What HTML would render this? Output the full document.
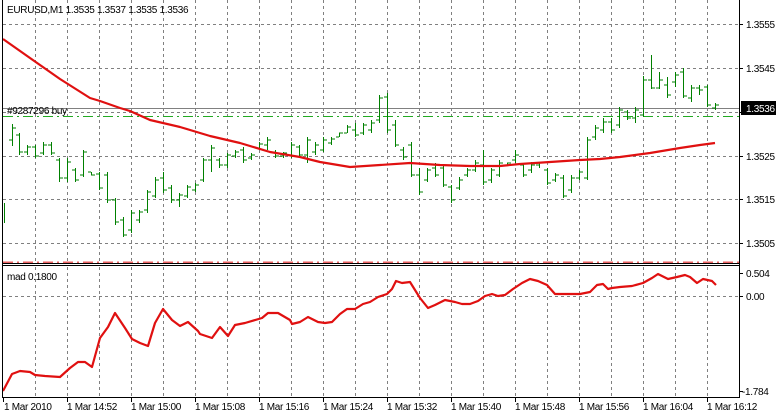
<!DOCTYPE html>
<html><head><meta charset="utf-8"><style>
html,body{margin:0;padding:0;background:#fff;}
svg{display:block;font-family:"Liberation Sans",sans-serif;font-size:10px;letter-spacing:-0.3px;}
</style></head><body>
<svg width="776" height="414" viewBox="0 0 776 414" xmlns="http://www.w3.org/2000/svg">
<rect width="776" height="414" fill="#fff"/>
<g stroke="#808080" stroke-width="1" stroke-dasharray="3,3" fill="none">
<path d="M35.5 0V263M67.5 0V263M99.5 0V263M131.5 0V263M163.5 0V263M195.5 0V263M227.5 0V263M259.5 0V263M291.5 0V263M323.5 0V263M355.5 0V263M387.5 0V263M419.5 0V263M451.5 0V263M483.5 0V263M515.5 0V263M547.5 0V263M579.5 0V263M611.5 0V263M643.5 0V263M675.5 0V263M707.5 0V263"/>
<path d="M35.5 267V397M67.5 267V397M99.5 267V397M131.5 267V397M163.5 267V397M195.5 267V397M227.5 267V397M259.5 267V397M291.5 267V397M323.5 267V397M355.5 267V397M387.5 267V397M419.5 267V397M451.5 267V397M483.5 267V397M515.5 267V397M547.5 267V397M579.5 267V397M611.5 267V397M643.5 267V397M675.5 267V397M707.5 267V397"/>
<path d="M3 24.5H739M3 68.5H739M3 112.5H739M3 156.5H739M3 199.5H739M3 243.5H739M3 296.5H739"/>
</g>
<path d="M3 108.5H739" stroke="#808080"/>
<path d="M3 116.5H739" stroke="#22aa22" stroke-dasharray="10,4,2,4"/>
<path d="M3 262.5H739" stroke="#e02020" stroke-width="2" stroke-dasharray="10,4,2,4" opacity="0.7"/>
<g stroke="#008000" stroke-width="1" fill="none">
<path d="M4.5 203V223M12.5 124V146M9 140H12M12 128H16M19.5 133V155M16 135H19M19 152H23M27.5 145V155M24 152H27M27 147H31M35.5 145V158M32 147H35M35 156H39M43.5 142V155M40 153H43M43 145H47M51.5 142V155M48 145H51M51 153H55M59.5 158V182M56 160H59M59 178H63M67.5 158V182M64 178H67M67 162H71M75.5 168V182M72 170H75M75 180H79M83.5 150V177M80 175H83M83 152H87M91.5 172V175M88 172H91M91 175H95M99.5 172V190M96 174H99M99 188H103M107.5 172V203M104 175H107M107 200H111M115.5 198V225M112 200H115M115 222H119M123.5 217V237M120 220H123M123 235H127M131.5 210V233M128 230H131M131 213H135M139.5 210V223M136 220H139M139 212H143M147.5 190V213M144 210H147M147 192H151M155.5 177V198M152 196H155M155 180H159M163.5 172V193M160 178H163M163 190H167M171.5 185V203M168 188H171M171 200H175M179.5 193V207M176 200H179M179 195H183M187.5 185V198M184 196H187M187 187H191M195.5 183V192M192 190H195M195 185H199M203.5 158V182M200 180H203M203 160H207M211.5 145V172M208 160H211M211 148H215M219.5 158V168M216 160H219M219 165H223M227.5 153V168M224 165H227M227 155H231M235.5 150V158M232 156H235M235 152H239M243.5 147V163M240 150H243M243 160H247M251.5 153V160M248 158H251M251 155H255M259.5 142V150M256 148H259M259 144H263M267.5 137V150M264 145H267M267 140H271M275.5 150V158M272 152H275M275 156H279M283.5 152V158M280 156H283M283 153H287M291.5 142V158M288 155H291M291 145H295M299.5 145V157M296 147H299M299 155H303M307.5 137V163M304 155H307M307 140H311M315.5 142V155M312 152H315M315 145H319M323.5 137V152M320 150H323M323 140H327M331.5 137V145M328 143H331M331 139H335M339.5 133V137M336 137H339M339 133H343M347.5 125V133M344 133H347M347 127H351M355.5 123V137M352 130H355M355 135H359M363.5 123V135M360 133H363M363 125H367M371.5 120V133M368 130H371M371 123H375M379.5 95V123M376 120H379M379 98H383M387.5 93V133M384 97H387M387 130H391M395.5 120V147M392 125H395M395 145H399M403.5 147V160M400 150H403M403 157H407M411.5 142V177M408 145H411M411 175H415M419.5 168V195M416 175H419M419 192H423M427.5 168V182M424 180H427M427 170H431M435.5 163V177M432 168H435M435 175H439M443.5 165V187M440 168H443M443 185H447M451.5 185V203M448 187H451M451 200H455M459.5 177V190M456 188H459M459 180H463M467.5 168V177M464 175H467M467 170H471M475.5 160V172M472 170H475M475 163H479M483.5 150V185M480 165H483M483 182H487M491.5 168V183M488 180H491M491 170H495M499.5 160V177M496 175H499M499 163H503M507.5 163V165M504 165H507M507 163H511M515.5 150V163M512 160H515M515 155H519M523.5 163V177M520 165H523M523 175H527M531.5 162V173M528 170H531M531 165H535M539.5 162V168M536 165H539M539 163H543M547.5 168V185M544 170H547M547 183H551M555.5 173V182M552 180H555M555 175H559M563.5 175V198M560 178H563M563 196H567M571.5 175V193M568 190H571M571 178H575M579.5 170V180M576 178H579M579 172H583M587.5 137V180M584 178H587M587 140H591M595.5 125V140M592 137H595M595 128H599M603.5 118V133M600 130H603M603 122H607M611.5 118V133M608 122H611M611 130H615M619.5 107V128M616 125H619M619 110H623M627.5 110V120M624 112H627M627 118H631M635.5 107V123M632 118H635M635 110H639M643.5 76V117M640 115H643M643 80H647M651.5 55V89M648 80H651M651 88H655M659.5 72V89M656 88H659M659 80H663M667.5 77V98M664 85H667M667 95H671M675.5 72V87M672 82H675M675 75H679M683.5 68V98M680 72H683M683 96H687M691.5 85V102M688 98H691M691 88H695M699.5 85V95M696 88H699M699 90H703M707.5 85V107M704 87H707M707 105H711M715.5 103V110M712 108H715M715 105H719"/>
</g>
<polyline fill="none" stroke="#e01010" stroke-width="2.2" stroke-linejoin="round" points="3,39 30,58 60,79 90,98 100,101 120,108 130,111 150,120 180,127 210,136 240,143 270,152 300,157 320,162 350,167 380,165 410,163 440,165 470,166 500,166 520,164 550,162 580,160 600,159 620,157 650,153 680,148 700,145 715,143"/>
<polyline fill="none" stroke="#e01010" stroke-width="2.2" stroke-linejoin="round" points="3,391 12,374 20,371 30,372 35,375 45,376 60,377 70,368 78,362 85,362 92,367 100,338 108,327 115,313 125,328 132,339 140,343 148,346 155,323 163,309 172,320 180,326 188,322 198,331 200,334 212,338 220,327 228,336 235,325 245,323 262,318 268,313 278,313 290,320 292,324 300,322 308,317 318,322 325,323 332,322 340,314 347,309 355,309 363,304 370,302 378,297 387,294 392,289 396,281 402,283 410,282 420,298 428,308 435,305 445,300 455,302 462,304 470,304 478,301 485,296 492,294 498,296 505,295 513,289 522,283 530,279 538,281 547,285 555,294 565,294 580,294 590,292 597,285 603,284 608,289 612,288 620,287 632,286 643,283 652,278 658,274 668,279 677,277 685,275 690,277 697,283 703,279 712,281 716,285"/>
<g stroke="#000" fill="none">
<path d="M2.5 0V397.5H739.5V0"/>
<path d="M2 263.5H740M2 265.5H740"/>
<path d="M739 24.5H743M739 68.5H743M739 112.5H743M739 156.5H743M739 199.5H743M739 243.5H743M739 273.5H743M739 296.5H743M739 391.5H743"/>
<path d="M3.5 397V402M67.5 397V402M131.5 397V402M195.5 397V402M259.5 397V402M323.5 397V402M387.5 397V402M451.5 397V402M515.5 397V402M579.5 397V402M643.5 397V402M707.5 397V402"/>
</g>
<g fill="#000">
<text x="7" y="13">EURUSD,M1  1.3535 1.3537 1.3535 1.3536</text>
<text x="7" y="114">#9287296 buy</text>
<text x="7" y="280">mad 0.1800</text>
<text x="746" y="28">1.3555</text>
<text x="746" y="72">1.3545</text>
<text x="746" y="160">1.3525</text>
<text x="746" y="203">1.3515</text>
<text x="746" y="247">1.3505</text>
<text x="746" y="277">0.504</text>
<text x="746" y="300">0.00</text>
<text x="742" y="395">-1.784</text>
<text x="4" y="410">1 Mar 2010</text>
<text x="67" y="410">1 Mar 14:52</text>
<text x="131" y="410">1 Mar 15:00</text>
<text x="195" y="410">1 Mar 15:08</text>
<text x="259" y="410">1 Mar 15:16</text>
<text x="323" y="410">1 Mar 15:24</text>
<text x="387" y="410">1 Mar 15:32</text>
<text x="451" y="410">1 Mar 15:40</text>
<text x="515" y="410">1 Mar 15:48</text>
<text x="579" y="410">1 Mar 15:56</text>
<text x="643" y="410">1 Mar 16:04</text>
<text x="707" y="410">1 Mar 16:12</text>
</g>
<rect x="741" y="101" width="35" height="14" fill="#000"/>
<text x="746" y="112" fill="#fff">1.3536</text>
</svg>
</body></html>
